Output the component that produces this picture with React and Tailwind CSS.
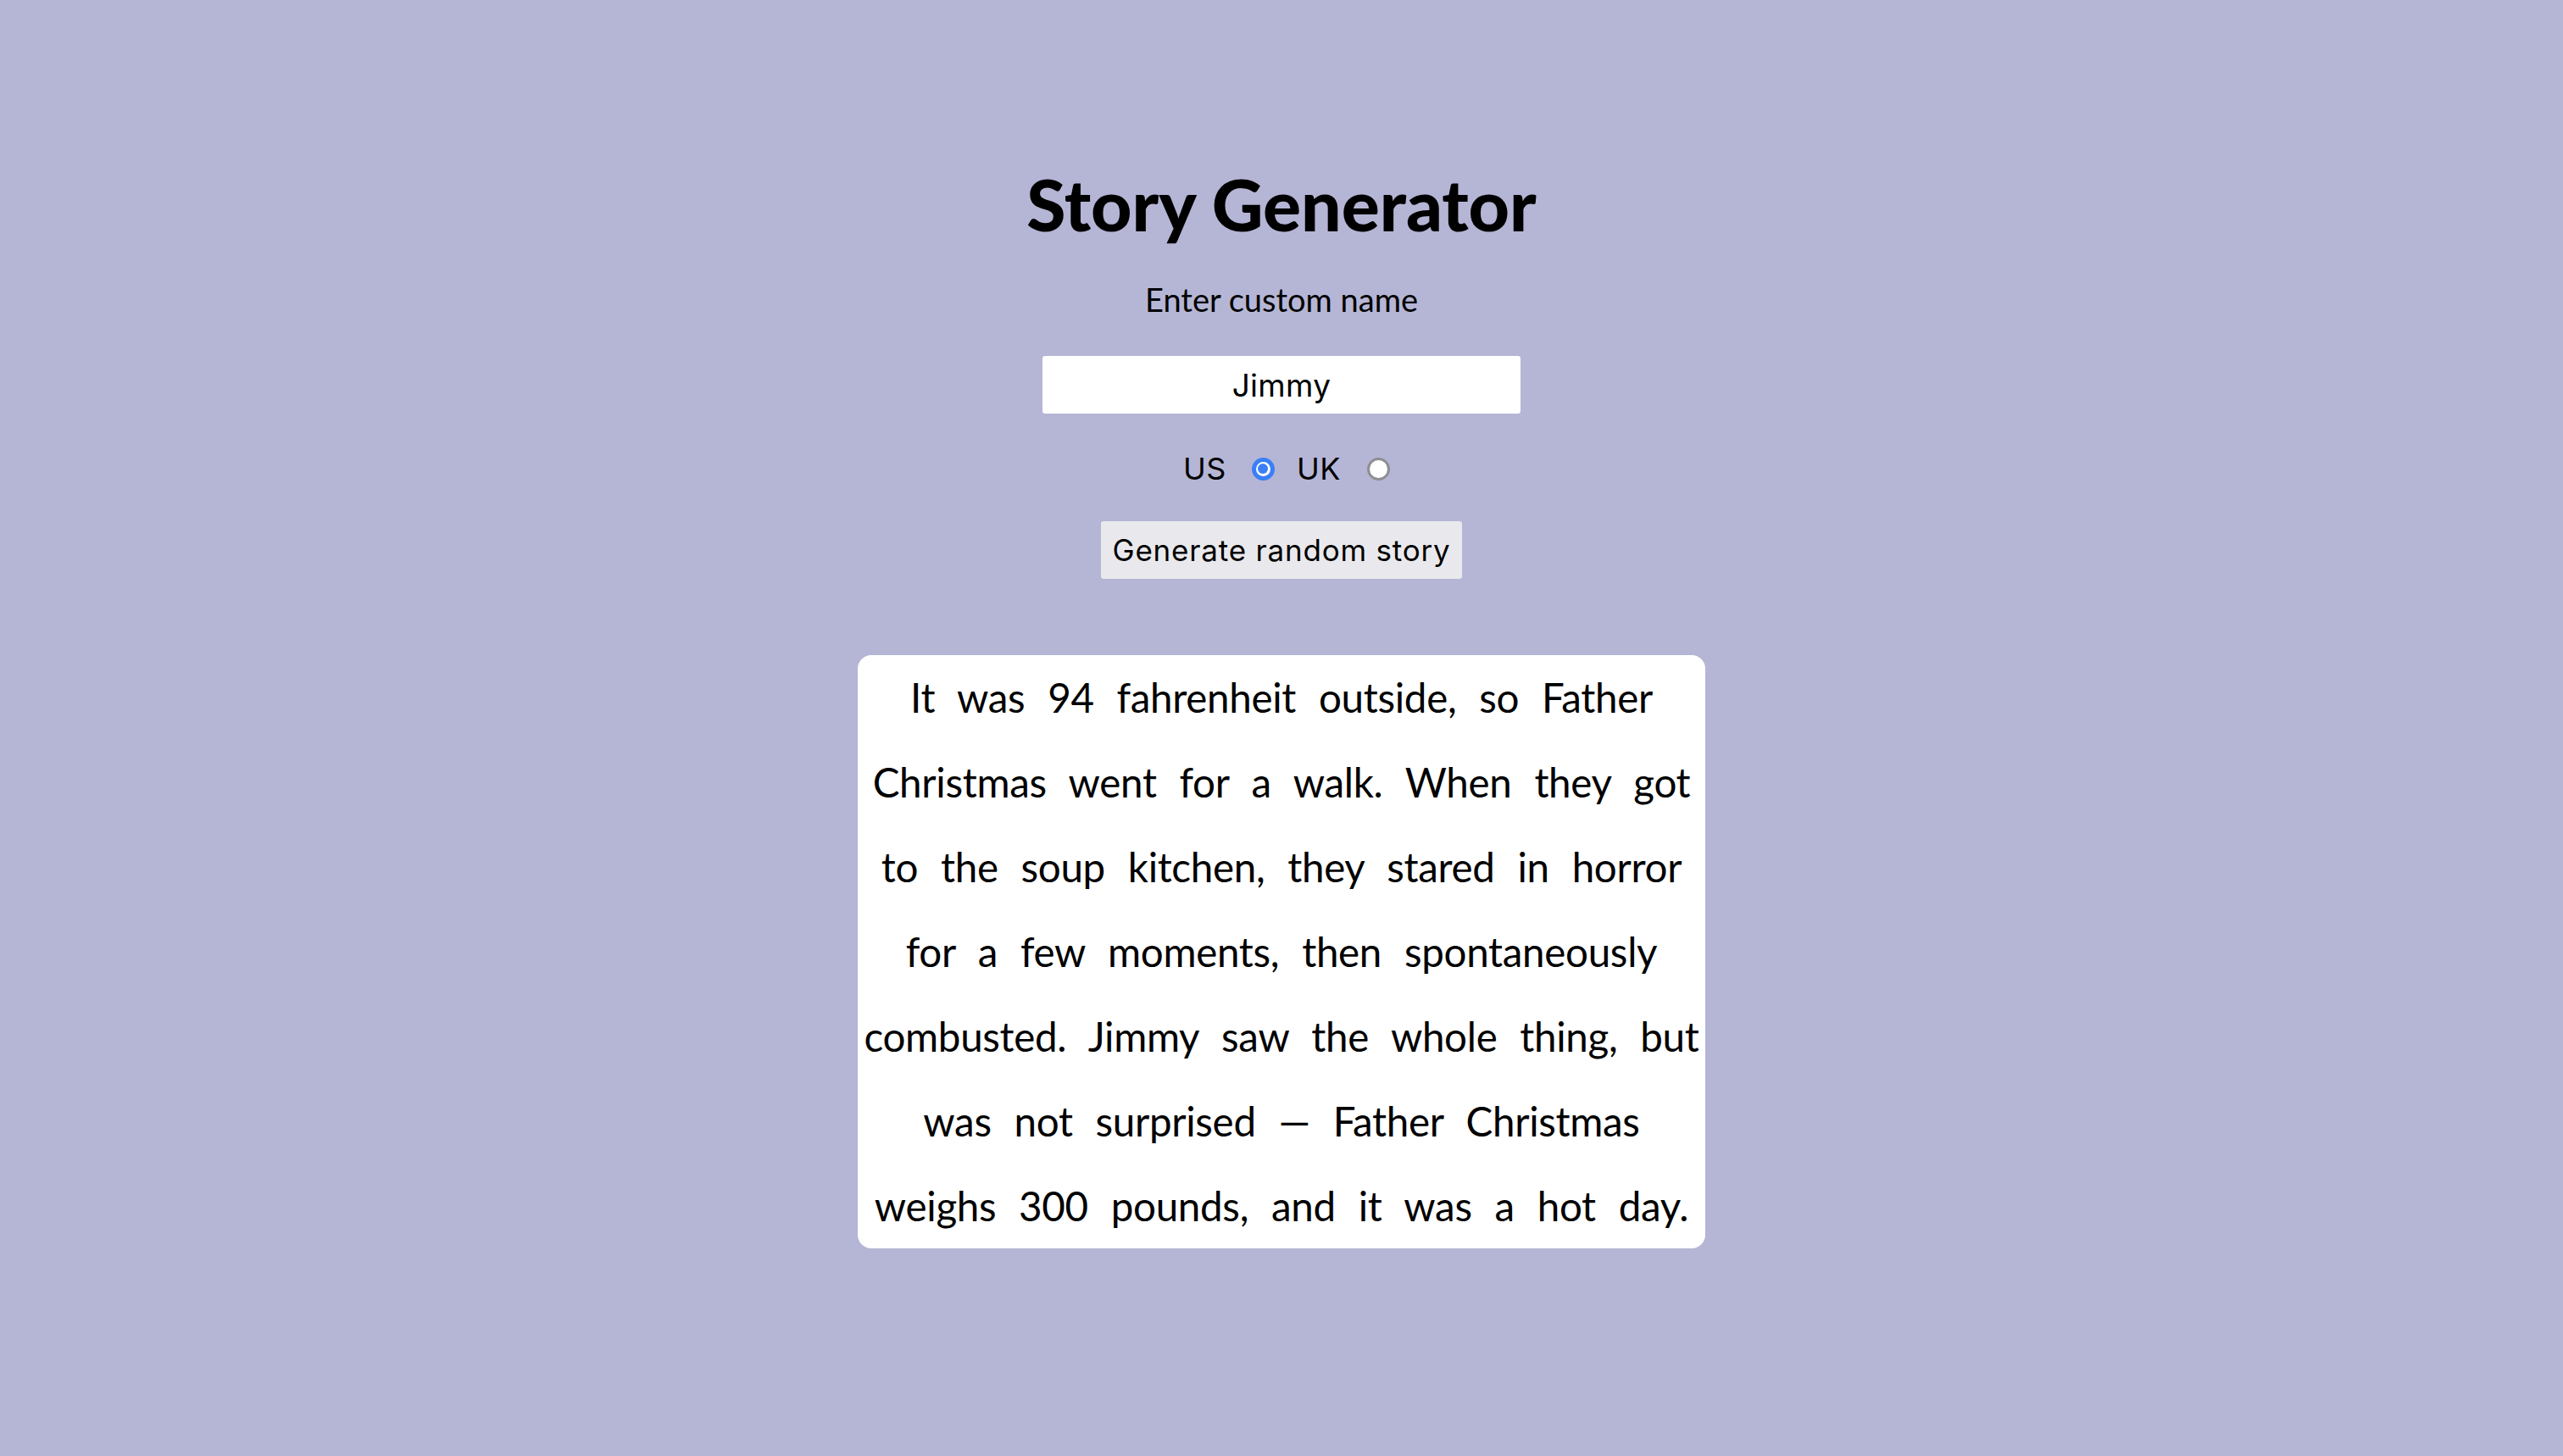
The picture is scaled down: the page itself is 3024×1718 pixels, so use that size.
const story = [
  "It was 94 fahrenheit outside, so Father",
  "Christmas went for a walk. When they got",
  "to the soup kitchen, they stared in horror",
  "for a few moments, then spontaneously",
  "combusted. Jimmy saw the whole thing, but",
  "was not surprised \u2014 Father Christmas",
  "weighs 300 pounds, and it was a hot day.",
];

// ─── Radio dot ─────────────────────────────────────
function Radio({ checked }) {
  if (checked) {
    return (
      <span className="w-[27px] h-[27px] rounded-full bg-[#3a7ff6] flex items-center justify-center">
        <span className="w-[17px] h-[17px] rounded-full bg-white flex items-center justify-center">
          <span className="w-[12px] h-[12px] rounded-full bg-[#3a7ff6]" />
        </span>
      </span>
    );
  }
  return <span className="block w-[27px] h-[27px] rounded-full border-[3px] border-[#8e8e93] bg-white" />;
}

export default function App() {
  return (
    <div className="min-h-screen w-full bg-[#b5b6d5] flex flex-col items-center text-black">
      <h1 className="mt-[195px] font-['Lato',sans-serif] font-black text-[84px] leading-[92px]">
        Story Generator
      </h1>

      <label className="mt-[36px] h-[60px] flex items-center font-['Lato',sans-serif] text-[38px]">
        Enter custom name
      </label>

      <input
        type="text"
        defaultValue="Jimmy"
        className="mt-[37px] w-[564px] h-[68px] bg-white rounded-[3px] text-center font-['Inter',sans-serif] text-[37px] tracking-[0.3px] outline-none"
      />

      <div className="mt-[40px] h-[50px] pl-[12px] flex items-center font-['Inter',sans-serif] text-[36px] tracking-[0.5px]">
        <span>US</span>
        <span className="ml-[30px] mr-[26px]">
          <Radio checked />
        </span>
        <span>UK</span>
        <span className="ml-[31px]">
          <Radio />
        </span>
      </div>

      <button className="mt-[37px] w-[426px] h-[68px] bg-[#e9e9ed] rounded-[3px] font-['Inter',sans-serif] text-[35px] tracking-[0.8px]">
        Generate random story
      </button>

      <div className="mt-[90px] w-[1000px] bg-white rounded-[16px] text-center font-['Lato',sans-serif] text-[47.5px] leading-[100px] tracking-[-0.3px] [word-spacing:15px]">
        {story.map((line) => (
          <span key={line} className="block whitespace-nowrap">
            {line}
          </span>
        ))}
      </div>
    </div>
  );
}
